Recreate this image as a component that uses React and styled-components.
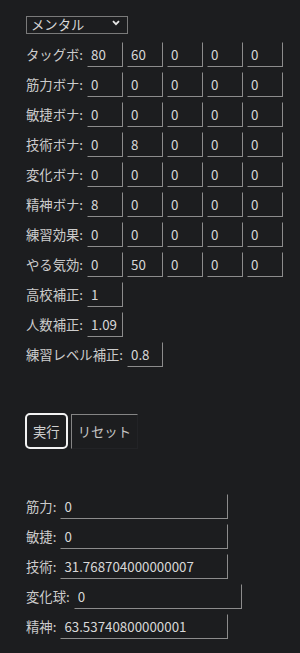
import React from 'react';
import styled, { createGlobalStyle } from 'styled-components';

const GlobalStyle = createGlobalStyle`
  html, body {
    margin: 0;
    background: #1c1d1f;
  }
  body {
    font-family: 'Noto Sans CJK JP', 'Noto Sans', sans-serif;
    font-size: 13.333px;
    color: #cccccc;
  }
`;

const Page = styled.div`
  padding: 15px 0 20px 26px;
  display: flex;
  flex-direction: column;
`;

const SelectWrap = styled.div`
  position: relative;
  width: 102px;
  height: 18px;
  margin-bottom: 9px;
`;

const Select = styled.select`
  appearance: none;
  width: 102px;
  height: 18px;
  box-sizing: border-box;
  border: 1px solid #7a7a7a;
  border-radius: 0;
  background: transparent;
  color: #d6d6d6;
  font-family: inherit;
  font-size: 13.333px;
  line-height: 16px;
  padding: 0 0 0 4px;
  margin: 0;
`;

const Chevron = styled.svg`
  position: absolute;
  right: 8px;
  top: 5px;
  pointer-events: none;
`;

const Rows = styled.div`
  display: flex;
  flex-direction: column;
  gap: 5px;
`;

const Row = styled.div`
  display: flex;
  align-items: center;
  gap: 4px;
  height: 25px;
`;

const Label = styled.span`
  white-space: nowrap;
  line-height: 25px;
`;

const Field = styled.input`
  width: ${p => p.$w || 36}px;
  height: 25px;
  box-sizing: border-box;
  margin: 0;
  padding: 0 2px 0 3px;
  background: transparent;
  color: #d8d8d8;
  font-family: inherit;
  font-size: 13.333px;
  border: 1px solid;
  border-color: #1c1d1f #8c8c8c #8c8c8c #1c1d1f;
  outline: none;
`;

const Buttons = styled.div`
  display: flex;
  align-items: flex-end;
  gap: 3px;
  margin: 46px 0 0 -1px;
`;

const RunButton = styled.button`
  height: 36px;
  padding: 0 6px;
  box-sizing: border-box;
  border: 2px solid #f2f2f2;
  border-radius: 5px;
  background: transparent;
  color: #d0d0d0;
  font-family: inherit;
  font-size: 13.333px;
`;

const ResetButton = styled.button`
  height: 35px;
  padding: 0 6px;
  box-sizing: border-box;
  border: 1px solid;
  border-color: #858585 #222326 #222326 #858585;
  border-radius: 0;
  background: transparent;
  color: #c4c4c4;
  font-family: inherit;
  font-size: 13.333px;
`;

const Results = styled(Rows)`
  margin-top: 45px;
`;

const bonusRows = [
  ['タッグボ', ['80', '60', '0', '0', '0']],
  ['筋力ボナ', ['0', '0', '0', '0', '0']],
  ['敏捷ボナ', ['0', '0', '0', '0', '0']],
  ['技術ボナ', ['0', '8', '0', '0', '0']],
  ['変化ボナ', ['0', '0', '0', '0', '0']],
  ['精神ボナ', ['8', '0', '0', '0', '0']],
  ['練習効果', ['0', '0', '0', '0', '0']],
  ['やる気効', ['0', '50', '0', '0', '0']],
];

const factors = [
  ['高校補正', '1'],
  ['人数補正', '1.09'],
  ['練習レベル補正', '0.8'],
];

const results = [
  ['筋力', '0'],
  ['敏捷', '0'],
  ['技術', '31.768704000000007'],
  ['変化球', '0'],
  ['精神', '63.53740800000001'],
];

export default function App() {
  return (
    <>
      <GlobalStyle />
      <Page>
        <SelectWrap>
          <Select defaultValue="mental">
            <option value="mental">メンタル</option>
          </Select>
          <Chevron width="8" height="6" viewBox="0 0 8 6">
            <path d="M1 1.2 L4 4.2 L7 1.2" fill="none" stroke="#e6e6e6" strokeWidth="1.8" />
          </Chevron>
        </SelectWrap>
        <Rows>
          {bonusRows.map(([label, values]) => (
            <Row key={label}>
              <Label>{label}:</Label>
              {values.map((v, i) => (
                <Field key={i} type="text" defaultValue={v} />
              ))}
            </Row>
          ))}
          {factors.map(([label, v]) => (
            <Row key={label}>
              <Label>{label}:</Label>
              <Field type="text" defaultValue={v} />
            </Row>
          ))}
        </Rows>
        <Buttons>
          <RunButton>実行</RunButton>
          <ResetButton>リセット</ResetButton>
        </Buttons>
        <Results>
          {results.map(([label, v]) => (
            <Row key={label}>
              <Label>{label}:</Label>
              <Field type="text" $w={168} defaultValue={v} readOnly />
            </Row>
          ))}
        </Results>
      </Page>
    </>
  );
}
